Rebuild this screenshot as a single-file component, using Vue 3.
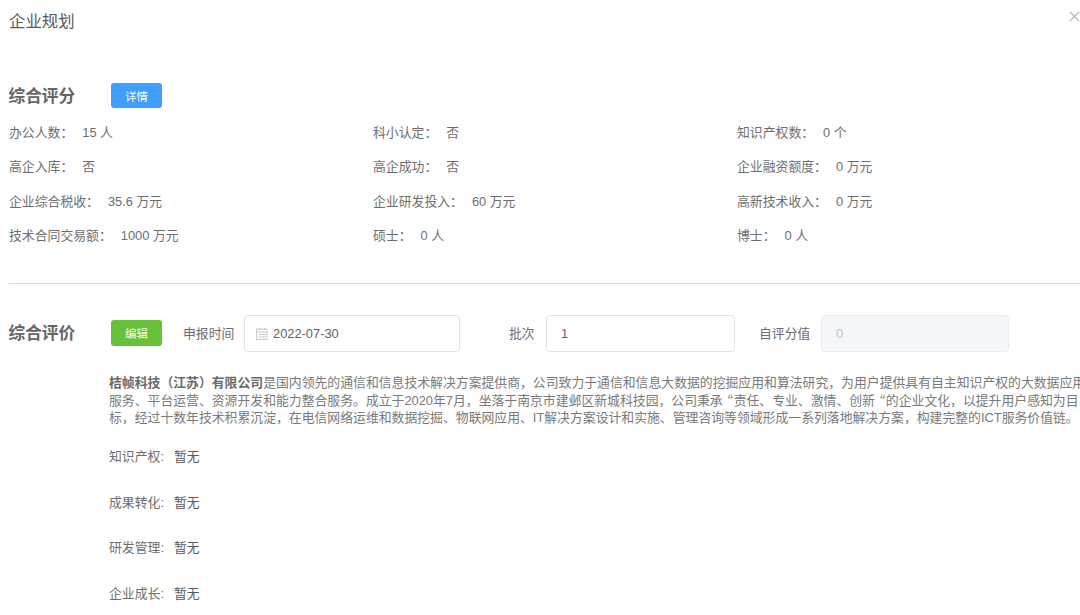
<script setup>
const stats = [
  ['办公人数：', '15 人'], ['科小认定：', '否'], ['知识产权数：', '0 个'],
  ['高企入库：', '否'], ['高企成功：', '否'], ['企业融资额度：', '0 万元'],
  ['企业综合税收：', '35.6 万元'], ['企业研发投入：', '60 万元'], ['高新技术收入：', '0 万元'],
  ['技术合同交易额：', '1000 万元'], ['硕士：', '0 人'], ['博士：', '0 人'],
]
const items = ['知识产权', '成果转化', '研发管理', '企业成长']
</script>

<template>
  <div class="page">
    <header class="dialog-head">
      <h1 class="dialog-title">企业规划</h1>
      <svg class="close" width="11" height="11" viewBox="0 0 11 11" fill="none" stroke="#a9adb3" stroke-width="1.1">
        <path d="M.8.8l9.4 9.4M10.2.8L.8 10.2" />
      </svg>
    </header>

    <section class="score">
      <div class="section-head">
        <h2 class="section-title">综合评分</h2>
        <button class="btn btn-blue">详情</button>
      </div>
      <div class="stats">
        <div v-for="s in stats" :key="s[0]" class="stat">
          <span>{{ s[0] }}</span><span class="stat-value">{{ s[1] }}</span>
        </div>
      </div>
    </section>

    <hr class="divider" />

    <section class="evaluate">
      <div class="form-row">
        <h2 class="section-title">综合评价</h2>
        <button class="btn btn-green">编辑</button>
        <label class="field-label label-date">申报时间</label>
        <div class="input input-date">
          <svg class="cal" width="13" height="13" viewBox="0 0 13 13" fill="none" stroke="#c6cad1" stroke-width="1">
            <rect x="1.5" y="2" width="10.5" height="10.5" />
            <path d="M1.5 5h10.5M4 .8v2.4M9.5 .8v2.4M3.5 7.5h7.5M3.5 10h7.5" />
          </svg>
          <span>2022-07-30</span>
        </div>
        <label class="field-label label-batch">批次</label>
        <div class="input input-batch">1</div>
        <label class="field-label label-self">自评分值</label>
        <div class="input input-self">0</div>
      </div>

      <div class="detail">
        <p class="intro"><strong>桔帧科技（江苏）有限公司</strong>是国内领先的通信和信息技术解决方案提供商，公司致力于通信和信息大数据的挖掘应用和算法研究，为用户提供具有自主知识产权的大数据应用<br />服务、平台运营、资源开发和能力整合服务。成立于2020年7月，坐落于南京市建邺区新城科技园，公司秉承<span class="cjk-quote">“</span>责任、专业、激情、创新<span class="cjk-quote">“</span>的企业文化，以提升用户感知为目<br />标，经过十数年技术积累沉淀，在电信网络运维和数据挖掘、物联网应用、IT解决方案设计和实施、管理咨询等领域形成一系列落地解决方案，构建完整的ICT服务价值链。</p>
        <div v-for="i in items" :key="i" class="item">
          <span class="item-label">{{ i }}:</span><span class="item-value">暂无</span>
        </div>
      </div>
    </section>
  </div>
</template>

<style>
html, body { margin: 0; background: #fff; overflow: hidden; }
</style>

<style scoped>
.page {
  width: 1080px;
  height: 615px;
  overflow: hidden;
  box-sizing: border-box;
  padding-left: 9px;
  font-family: "Liberation Sans", "Noto Sans CJK SC", sans-serif;
  font-size: 12.85px;
  color: #6e6e6e;
  background: #fff;
}
.dialog-head {
  display: flex;
  justify-content: space-between;
  height: 83px;
}
.dialog-title {
  margin: 9px 0 0;
  font-size: 16.4px;
  line-height: 24px;
  font-weight: 400;
  color: #5a5a5a;
}
.close { margin: 11px 0 0; }
.section-head {
  display: flex;
  align-items: center;
  height: 25px;
}
.section-title {
  margin: 0;
  width: 102px;
  flex: none;
  font-size: 16.7px;
  line-height: 26px;
  font-weight: 700;
  color: #666;
  position: relative;
  left: -0.5px;
  top: 0.5px;
}
.section-head .section-title { top: 1.5px; }
.btn {
  width: 51px;
  height: 25px;
  padding: 0;
  border: 0;
  border-radius: 3px;
  color: #fff;
  font-family: inherit;
  font-size: 11.4px;
  font-weight: 400;
  flex: none;
}
.btn-blue { background: #409eff; }
.btn-green { background: #67c23a; height: 26px; }
.stats {
  margin-top: 8px;
  display: grid;
  grid-template-columns: 364px 364px 1fr;
  grid-auto-rows: 34.4px;
}
.stat {
  display: flex;
  align-items: center;
  line-height: 34.4px;
  white-space: nowrap;
}
.stat-value { margin-left: 9px; }
.divider {
  margin: 29px 0 0;
  border: 0;
  border-top: 1px solid #dcdcdc;
}
.form-row {
  margin-top: 31px;
  display: flex;
  align-items: center;
  height: 37px;
}
.field-label { flex: none; position: relative; top: -1px; }
.label-date { margin-left: 21px; width: 61px; }
.input {
  box-sizing: border-box;
  height: 37px;
  flex: none;
  display: flex;
  align-items: center;
  border: 1px solid #e2e4e9;
  border-radius: 4px;
  padding-left: 14px;
  color: #606266;
  background: #fff;
}
.input-date { width: 216px; padding-left: 10px; }
.cal { margin-right: 5px; }
.label-batch { margin-left: 49px; width: 37px; }
.input-batch { width: 189px; }
.label-self { margin-left: 24px; width: 62px; }
.input-self {
  width: 188px;
  background: #f5f7fa;
  border-color: #e9ecf1;
  color: #c0c4cc;
}
.detail { margin: 22px 0 0 100px; }
.intro {
  margin: 0;
  width: 1000px;
  line-height: 17.2px;
  white-space: nowrap;
  color: #7a7a7a;
}
.intro strong { font-weight: 700; color: #6a6a6a; }
.cjk-quote {
  display: inline-block;
  width: 0.85em;
  text-align: right;
  font-family: "Noto Sans CJK JP", sans-serif;
}
.item {
  margin-top: 25.5px;
  line-height: 20px;
  display: flex;
}
.intro + .item { margin-top: 21.2px; }
.item-label { width: 65px; }
.item-value { color: #5a5a5a; }
</style>
